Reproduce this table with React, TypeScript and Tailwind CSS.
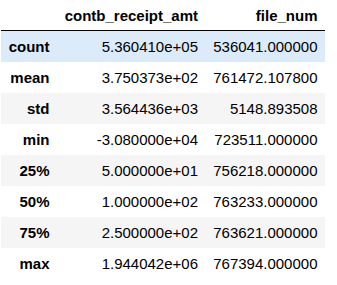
import React from "react";

const rows: [string, string, string][] = [
  ["count", "5.360410e+05", "536041.000000"],
  ["mean", "3.750373e+02", "761472.107800"],
  ["std", "3.564436e+03", "5148.893508"],
  ["min", "-3.080000e+04", "723511.000000"],
  ["25%", "5.000000e+01", "756218.000000"],
  ["50%", "1.000000e+02", "763233.000000"],
  ["75%", "2.500000e+02", "763621.000000"],
  ["max", "1.944042e+06", "767394.000000"],
];

export default function App() {
  return (
    <div
      className="w-[337px] h-[285px] bg-white text-black overflow-hidden"
      style={{ fontFamily: '"Liberation Sans", Arial, sans-serif' }}
    >
      <div className="ml-[1px] w-[324px] text-[15px]">
        <div className="grid grid-cols-[56px_148.5px_119.5px] h-[31px] border-b border-black font-bold items-center">
          <div />
          <div className="text-right pr-[7.5px] pt-[2px]">contb_receipt_amt</div>
          <div className="text-right pr-[7.5px] pt-[2px]">file_num</div>
        </div>
        {rows.map(([k, a, b], i) => (
          <div
            key={k}
            className={
              "grid grid-cols-[56px_148.5px_119.5px] h-[31px] items-center " +
              (i === 0 ? "bg-[#dcebfa]" : i % 2 === 0 ? "bg-[#f5f5f5]" : "bg-white")
            }
          >
            <div className="text-right pr-[7.5px] font-bold pt-[1px]">{k}</div>
            <div className="text-right pr-[7.5px] pt-[1px]">{a}</div>
            <div className="text-right pr-[7.5px] pt-[1px]">{b}</div>
          </div>
        ))}
      </div>
    </div>
  );
}
